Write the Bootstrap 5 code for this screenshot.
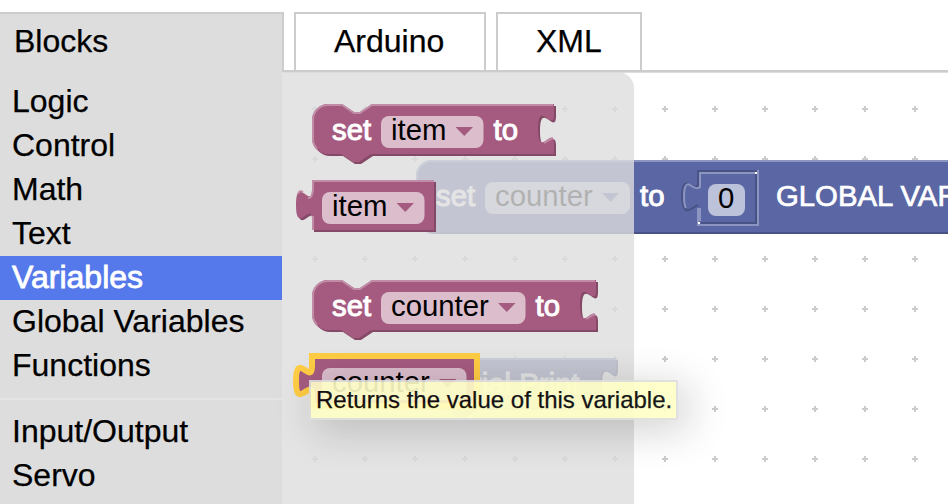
<!DOCTYPE html>
<html lang="en">
<head>
<meta charset="utf-8">
<meta name="viewport" content="width=device-width, initial-scale=1">
<title>Blocks</title>
<link href="https://cdn.jsdelivr.net/npm/bootstrap@5.3.0/dist/css/bootstrap.min.css" rel="stylesheet">
<style>
  body { font-family: "Liberation Sans", Arial, sans-serif; font-size: 32px; color: #000; background: #fff; -webkit-text-stroke: .25px; }
  .page-tabs { height: 70px; padding-top: 12px; gap: 10px; }
  .page-tab { border: 2px solid #ccc; border-bottom: 0; line-height: 54px; padding: 0 38px; color: #000; background: #fff; text-decoration: none; white-space: nowrap; }
  .tab-blocks { width: 284px; padding: 0 0 0 14px; border-left: 0; background: #ddd; }
  .tab-arduino { width: 192px; }
  .tab-xml { width: 146px; }
  .toolbox { width: 282px; background: #ddd; padding-top: 10px; }
  .toolbox-row { height: 44px; line-height: 42px; padding-left: 12px; color: #000; text-decoration: none; white-space: nowrap; }
  .toolbox-row.selected { background: #5579ea; color: #fff; -webkit-text-stroke: .8px #fff; }
  .toolbox-line { height: 2px; margin: 10px 0; background: #e5e5e5; }
  .canvas-area { border-top: 2px solid #ccc; }
  .canvas-area svg { display: block; }
  svg text { font-family: "Liberation Sans", Arial, sans-serif; font-size: 29.33px; }
  .label-text { fill: #fff; stroke: #fff; stroke-width: 1; }
  .plain-text { fill: #fff; stroke: #fff; stroke-width: .7; }
  .field { fill: #fff; fill-opacity: .6; }
  .pink { fill: #a55b80; } .pink-dark { fill: #844966; } .pink-light { fill: none; stroke: #c08ca6; stroke-width: 2; }
  .blue { fill: #5b67a5; } .blue-dark { fill: #495284; } .blue-light { fill: none; stroke: #8c95c0; stroke-width: 2; }
  .edge-dark { fill: none; stroke: #495284; stroke-width: 2; }
  .tip { left: 309px; top: 380px; width: 369px; height: 40px; font-size: 24px; line-height: 35px; padding-left: 5px; border: 2px solid #ddd; background: #ffffc7; opacity: .9; box-shadow: 8px 8px 40px 2px rgba(0,0,0,.2); white-space: nowrap; }
</style>
<script src="https://cdn.jsdelivr.net/npm/bootstrap@5.3.0/dist/js/bootstrap.bundle.min.js"></script>
</head>
<body class="overflow-hidden">
<div class="d-flex flex-column vh-100 position-relative overflow-hidden">
  <nav class="page-tabs d-flex flex-shrink-0">
    <a class="page-tab tab-blocks">Blocks</a>
    <a class="page-tab tab-arduino">Arduino</a>
    <a class="page-tab tab-xml">XML</a>
  </nav>
  <div class="d-flex flex-grow-1 overflow-hidden">
    <aside class="toolbox d-flex flex-column flex-shrink-0">
      <a class="toolbox-row flex-shrink-0">Logic</a>
      <a class="toolbox-row flex-shrink-0">Control</a>
      <a class="toolbox-row flex-shrink-0">Math</a>
      <a class="toolbox-row flex-shrink-0">Text</a>
      <a class="toolbox-row flex-shrink-0 selected">Variables</a>
      <a class="toolbox-row flex-shrink-0">Global Variables</a>
      <a class="toolbox-row flex-shrink-0">Functions</a>
      <div class="toolbox-line flex-shrink-0"></div>
      <a class="toolbox-row flex-shrink-0">Input/Output</a>
      <a class="toolbox-row flex-shrink-0">Servo</a>
    </aside>
    <main class="canvas-area flex-grow-1 overflow-hidden">
      <svg width="666" height="432" viewBox="282 72 666 432">
        <defs>
          <pattern id="grid" x="290" y="84" width="50" height="50" patternUnits="userSpaceOnUse">
            <path d="M22 25h6M25 22v6" stroke="#ccc" stroke-width="2"/>
          </pattern>
        </defs>
        <rect x="282" y="72" width="666" height="432" fill="url(#grid)"/>
        <path d="M282 72.500H948" stroke="#ddd"/>

        <!-- workspace: set counter to 0 -->
        <g>
          <path class="blue-dark" transform="translate(2 2)" d="M416 176a16 16 0 0 1 16-16H1000V232H432a16 16 0 0 1-16-16z"/>
          <path class="blue" d="M416 176a16 16 0 0 1 16-16H1000V232H432a16 16 0 0 1-16-16z"/>
          <path class="blue-light" d="M421 227A15 15 0 0 1 417 216V176a15 15 0 0 1 15-15H1000"/>
          <text class="label-text" x="436" y="206">set</text>
          <rect class="field" x="485" y="182" width="145" height="32" rx="8"/>
          <text x="495" y="206">counter</text>
          <path class="blue" d="M602 193h17l-8.500 9z"/>
          <text class="label-text" x="640" y="206">to</text>
          <path class="edge-dark" d="M757 171H698V184q-1 6-9 0c-5-3-7 4-7 12s2 16 7 14l9-5"/>
          <path class="blue-light" d="M758 170V225H697"/>
          <path class="blue-light" d="M755 173H700V188"/>
          <path class="blue-light" d="M700 187q-3 3-10-2c-4-3-6 3-6 11 0 6 0 9 2 12" stroke-width="1.300"/>
          <path class="blue-light" d="M698 208V225M700 208V221"/>
          <path class="edge-dark" d="M756 174V223H701"/>
          <path d="M755 172h2v2h-2zM698 222h2v2h-2z" fill="#fff"/>
          <rect class="field" x="708" y="184" width="37" height="32" rx="8"/>
          <text x="718" y="208">0</text>
          <text class="plain-text" x="776" y="206">GLOBAL VARIABLE</text>
        </g>

        <!-- workspace: Serial Print -->
        <g>
          <path class="blue-dark" transform="translate(2 2)" d="M416 374a16 16 0 0 1 16-16H616v10c0 20-16-16-16 15s16-5 16 15v10H475l-12 8h-6l-12-8H416z"/>
          <path class="blue" d="M416 374a16 16 0 0 1 16-16H616v10c0 20-16-16-16 15s16-5 16 15v10H475l-12 8h-6l-12-8H416z"/>
          <path class="blue-light" d="M417 400V374a15 15 0 0 1 15-15H616"/>
          <text class="label-text" x="436" y="394">Serial Print</text>
        </g>

        <path d="M282 72H618a16 16 0 0 1 16 16V504H282z" fill="#ddd" fill-opacity=".8"/>

        <!-- flyout: set item to -->
        <g>
          <path class="pink-dark" transform="translate(2 2)" d="M312 120a16 16 0 0 1 16-16h14l12 8h6l12-8H554v10c0 20-16-16-16 15s16-5 16 15v10H371l-12 8h-6l-12-8H328a16 16 0 0 1-16-16z"/>
          <path class="pink" d="M312 120a16 16 0 0 1 16-16h14l12 8h6l12-8H554v10c0 20-16-16-16 15s16-5 16 15v10H371l-12 8h-6l-12-8H328a16 16 0 0 1-16-16z"/>
          <path class="pink-light" d="M317 149A15 15 0 0 1 313 138V120a15 15 0 0 1 15-15h14l12 8h6l12-8H553M544 143l9-5"/>
          <text class="label-text" x="332" y="140">set</text>
          <rect class="field" x="381" y="116" width="102.500" height="32" rx="8"/>
          <text x="391" y="140">item</text>
          <path class="pink" d="M455.500 127h17.500l-8.750 9z"/>
          <text class="label-text" x="493.500" y="140">to</text>
        </g>

        <!-- flyout: item -->
        <g>
          <path class="pink-dark" transform="translate(2 2)" d="M312 180H434v50H312V220c0-20-16 16-16-15s16 5 16-15z"/>
          <path class="pink" d="M312 180H434v50H312V220c0-20-16 16-16-15s16 5 16-15z"/>
          <path class="pink-light" d="M434 181H313V190q-1 9-5 8M313 216V230M298 194q1-4 5-2"/>
          <rect class="field" x="322" y="192" width="102.500" height="32" rx="8"/>
          <text x="332" y="216">item</text>
          <path class="pink" d="M396.500 203h17.500l-8.750 9z"/>
        </g>

        <!-- flyout: set counter to -->
        <g>
          <path class="pink-dark" transform="translate(2 2)" d="M312 296a16 16 0 0 1 16-16h14l12 8h6l12-8H596v10c0 20-16-16-16 15s16-5 16 15v10H371l-12 8h-6l-12-8H328a16 16 0 0 1-16-16z"/>
          <path class="pink" d="M312 296a16 16 0 0 1 16-16h14l12 8h6l12-8H596v10c0 20-16-16-16 15s16-5 16 15v10H371l-12 8h-6l-12-8H328a16 16 0 0 1-16-16z"/>
          <path class="pink-light" d="M317 325A15 15 0 0 1 313 314V296a15 15 0 0 1 15-15h14l12 8h6l12-8H595M586 319l9-5"/>
          <text class="label-text" x="332" y="316">set</text>
          <rect class="field" x="381" y="292" width="144.500" height="32" rx="8"/>
          <text x="391" y="316">counter</text>
          <path class="pink" d="M498 303h17.500l-8.750 9z"/>
          <text class="label-text" x="535.500" y="316">to</text>
        </g>

        <!-- flyout: counter, highlighted -->
        <g>
          <path class="pink" d="M312 356H477v50H312V396c0-20-16 16-16-15s16 5 16-15z" stroke="#fc4" stroke-width="6"/>
          <rect class="field" x="322" y="368" width="144.500" height="32" rx="8"/>
          <text x="332" y="392">counter</text>
          <path class="pink" d="M439 379h17.500l-8.750 9z"/>
        </g>
      </svg>
    </main>
  </div>
  <div class="tip position-absolute">Returns the value of this variable.</div>
</div>
</body>
</html>
